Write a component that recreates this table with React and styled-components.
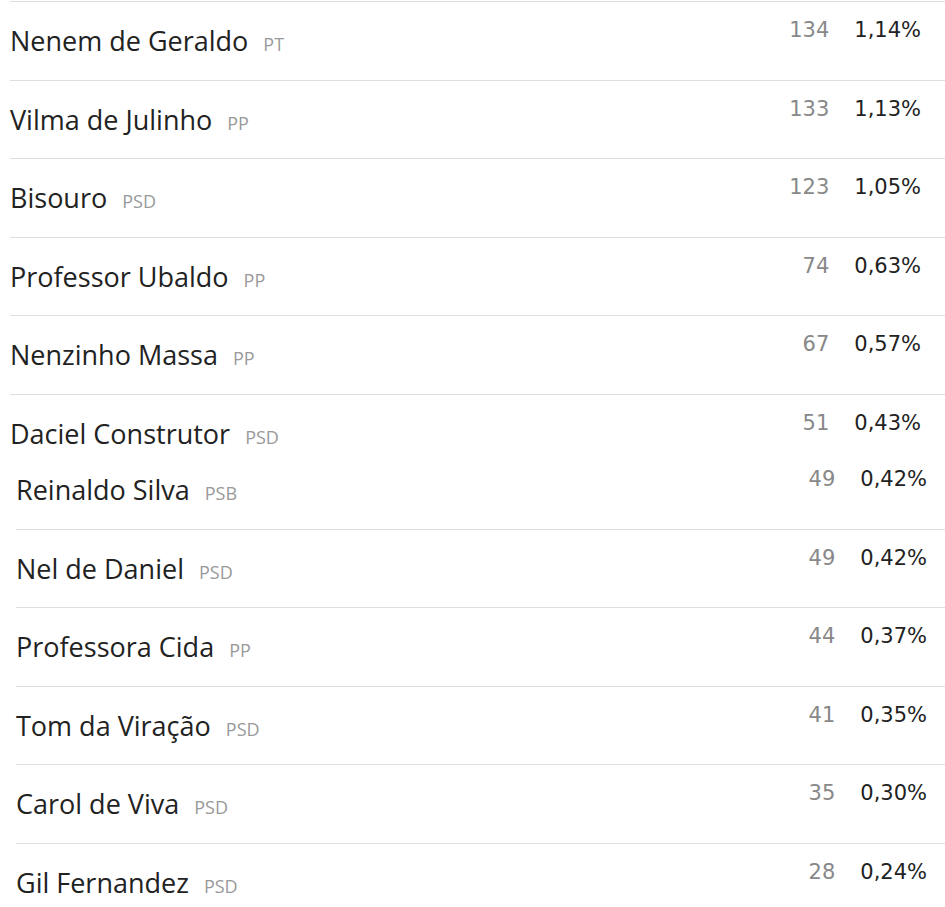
import React from "react";
import styled, { createGlobalStyle } from "styled-components";

const GlobalStyle = createGlobalStyle`
  html, body {
    margin: 0;
    padding: 0;
    background: #fff;
    overflow: hidden;
  }
  body {
    font-family: "Open Sans", "Liberation Sans", sans-serif;
  }
`;

const Page = styled.div`
  width: 945px;
  padding-top: 1px;
  overflow: hidden;
`;

const Group = styled.div`
  margin-left: ${({ $offset }) => $offset}px;
  width: 940px;
`;

const Row = styled.div`
  box-sizing: border-box;
  height: ${({ $short }) => ($short ? "56px" : "78.6px")};
  border-top: 1.5px solid ${({ $noLine }) => ($noLine ? "transparent" : "#dedede")};
  display: flex;
  justify-content: space-between;
  align-items: flex-start;
  padding-right: 29px;
`;

const NameBlock = styled.div`
  display: flex;
  align-items: baseline;
  padding-top: 24px;
`;

const Name = styled.span`
  font-size: 27px;
  line-height: 30px;
  color: #222;
`;

const Party = styled.span`
  margin-left: 15px;
  font-size: 18px;
  color: #999;
`;

const Values = styled.div`
  display: flex;
  align-items: baseline;
  gap: 25px;
  padding-top: 14px;
  font-family: "DejaVu Sans", "Noto Sans", sans-serif;
  font-size: 21px;
  line-height: 28px;
`;

const Votes = styled.span`
  color: #888;
`;

const Percent = styled.span`
  color: #222;
`;

const groupOne = [
  { name: "Nenem de Geraldo", party: "PT", votes: 134, pct: "1,14%" },
  { name: "Vilma de Julinho", party: "PP", votes: 133, pct: "1,13%" },
  { name: "Bisouro", party: "PSD", votes: 123, pct: "1,05%" },
  { name: "Professor Ubaldo", party: "PP", votes: 74, pct: "0,63%" },
  { name: "Nenzinho Massa", party: "PP", votes: 67, pct: "0,57%" },
  { name: "Daciel Construtor", party: "PSD", votes: 51, pct: "0,43%" },
];

const groupTwo = [
  { name: "Reinaldo Silva", party: "PSB", votes: 49, pct: "0,42%" },
  { name: "Nel de Daniel", party: "PSD", votes: 49, pct: "0,42%" },
  { name: "Professora Cida", party: "PP", votes: 44, pct: "0,37%" },
  { name: "Tom da Viração", party: "PSD", votes: 41, pct: "0,35%" },
  { name: "Carol de Viva", party: "PSD", votes: 35, pct: "0,30%" },
  { name: "Gil Fernandez", party: "PSD", votes: 28, pct: "0,24%" },
];

const CandidateRow = ({ c, short, noLine }) => (
  <Row $short={short} $noLine={noLine}>
    <NameBlock>
      <Name>{c.name}</Name>
      <Party>{c.party}</Party>
    </NameBlock>
    <Values>
      <Votes>{c.votes}</Votes>
      <Percent>{c.pct}</Percent>
    </Values>
  </Row>
);

export default function App() {
  return (
    <>
      <GlobalStyle />
      <Page>
        <Group $offset={10}>
          {groupOne.map((c, i) => (
            <CandidateRow key={c.name} c={c} short={i === groupOne.length - 1} />
          ))}
        </Group>
        <Group $offset={16}>
          {groupTwo.map((c, i) => (
            <CandidateRow key={c.name} c={c} noLine={i === 0} />
          ))}
        </Group>
      </Page>
    </>
  );
}
